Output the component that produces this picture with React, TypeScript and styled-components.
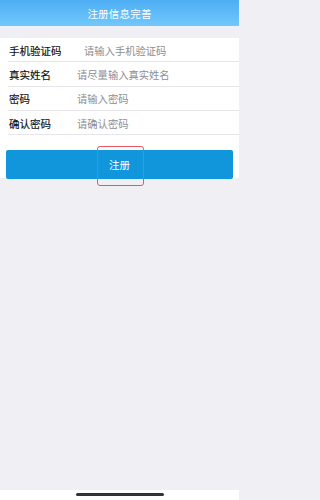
import { createGlobalStyle, styled } from "styled-components";

const GlobalStyle = createGlobalStyle`
  html, body {
    margin: 0;
    padding: 0;
    background: #efeff4;
  }
  * {
    box-sizing: border-box;
  }
`;

const FONT = `"Noto Sans CJK SC", "Liberation Sans", sans-serif`;

const Page = styled.div`
  width: 239px;
  height: 500px;
  display: flex;
  flex-direction: column;
  background: #efeff4;
  font-family: ${FONT};
`;

const Header = styled.div`
  height: 26px;
  display: flex;
  align-items: center;
  justify-content: center;
  background: linear-gradient(to bottom, #4daef3, #72c8fc);
  color: #ffffff;
  font-size: 10.5px;
  letter-spacing: 0.2px;
`;

const Body = styled.div`
  margin-top: 12px;
  background: #ffffff;
`;

const Row = styled.div`
  height: 24.3px;
  display: flex;
  align-items: center;
  padding-left: 9px;
  position: relative;
  &::after {
    content: "";
    position: absolute;
    left: 8px;
    right: 0;
    bottom: 0;
    height: 1px;
    background: #e6e6ea;
  }
`;

const Label = styled.span<{ $w: number }>`
  width: ${(p) => p.$w}px;
  flex: none;
  font-size: 10.5px;
  color: #0d0d0d;
  -webkit-text-stroke: 0.15px #0d0d0d;
`;

const Input = styled.input`
  flex: 1;
  min-width: 0;
  border: none;
  outline: none;
  padding: 0;
  font-family: ${FONT};
  font-size: 10.3px;
  color: #333333;
  background: transparent;
  &::placeholder {
    color: #8e8e93;
  }
`;

const ButtonArea = styled.div`
  padding: 15px 6px 0;
  display: flex;
  position: relative;
`;

const SubmitButton = styled.button`
  width: 100%;
  height: 29px;
  margin-bottom: -1px;
  border: none;
  border-radius: 2px;
  background: #1296db;
  color: #ffffff;
  font-family: ${FONT};
  font-size: 10.5px;
  position: relative;
  z-index: 1;
`;

const Highlight = styled.div`
  position: absolute;
  left: 97px;
  top: 11px;
  width: 47px;
  height: 40px;
  border: 1px solid #e9575c;
  border-radius: 3px;
  z-index: 2;
  pointer-events: none;
`;

const Spacer = styled.div`
  flex: 1;
`;

const HomeBar = styled.div`
  height: 10px;
  background: #ffffff;
  display: flex;
  justify-content: center;
  padding-top: 3px;
`;

const Indicator = styled.div`
  width: 88px;
  height: 2.5px;
  border-radius: 2px;
  background: #333333;
`;

const fields = [
  { label: "手机验证码", placeholder: "请输入手机验证码", w: 75, type: "tel" },
  { label: "真实姓名", placeholder: "请尽量输入真实姓名", w: 68, type: "text" },
  { label: "密码", placeholder: "请输入密码", w: 68, type: "password" },
  { label: "确认密码", placeholder: "请确认密码", w: 68, type: "password" },
];

const App = (): JSX.Element => {
  return (
    <Page>
      <GlobalStyle />
      <Header>注册信息完善</Header>
      <Body>
        {fields.map((f) => (
          <Row key={f.label}>
            <Label $w={f.w}>{f.label}</Label>
            <Input type={f.type} placeholder={f.placeholder} />
          </Row>
        ))}
        <ButtonArea>
          <SubmitButton>注册</SubmitButton>
          <Highlight />
        </ButtonArea>
      </Body>
      <Spacer />
      <HomeBar>
        <Indicator />
      </HomeBar>
    </Page>
  );
};

export default App;
